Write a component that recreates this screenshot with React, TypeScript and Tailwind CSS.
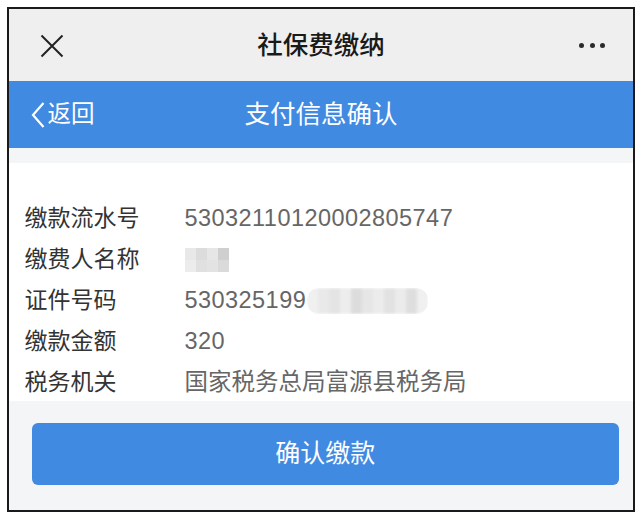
import React from "react";

const font = { fontFamily: "'Liberation Sans','Noto Sans CJK SC',sans-serif" };

function Blur({ cells, h }: { cells: string[]; h: number }) {
  return (
    <div className="flex blur-[1.5px]" style={{ height: h }}>
      {cells.map((c, i) => (
        <div key={i} className="w-[11px] h-full" style={{ background: c }} />
      ))}
    </div>
  );
}

export default function App() {
  const rows: [string, React.ReactNode][] = [
    ["缴款流水号", <span className="tracking-[0.45px]">53032110120002805747</span>],
    [
      "缴费人名称",
      <div className="flex flex-col blur-[0.6px]">
        <div className="flex h-[12px]">
          <div className="w-[11px] bg-[#e8e8e8]" />
          <div className="w-[11px] bg-[#dcdcdc]" />
          <div className="w-[11px] bg-[#e6e6e6]" />
          <div className="w-[11px] bg-[#cfcfcf]" />
        </div>
        <div className="flex h-[12px]">
          <div className="w-[11px] bg-[#ececec]" />
          <div className="w-[11px] bg-[#e0e0e0]" />
          <div className="w-[11px] bg-[#e3e3e3]" />
          <div className="w-[11px] bg-[#dadada]" />
        </div>
      </div>,
    ],
    [
      "证件号码",
      <div className="flex items-center">
        <span className="tracking-[0.45px]">530325199</span>
        <div className="ml-[1px] rounded-[12px] overflow-hidden">
          <Blur
            h={26}
            cells={["#f0f0f0", "#e9e9e9", "#e4e4e4", "#ededed", "#dcdcdc", "#e6e6e6", "#ececec", "#e2e2e2", "#ebebeb", "#dedede", "#f0f0f0"]}
          />
        </div>
      </div>,
    ],
    ["缴款金额", <span className="tracking-[0.45px]">320</span>],
    ["税务机关", "国家税务总局富源县税务局"],
  ];

  return (
    <div className="w-[643px] h-[519px] bg-white pt-[7px] pl-[7px]" style={font}>
      <div className="w-[628px] h-[505px] border-2 border-[#1a1a1a] flex flex-col overflow-hidden">
        {/* top nav */}
        <div className="h-[72px] shrink-0 bg-[#efefef] flex items-center justify-between pl-[30.5px] pr-[28px] relative">
          <svg width="24" height="24" viewBox="0 0 24 24" className="mt-[1px]">
            <path d="M1.5 1.5 L22.5 22.5 M22.5 1.5 L1.5 22.5" stroke="#222" strokeWidth="2" fill="none" />
          </svg>
          <div className="absolute left-0 right-0 text-center text-[25.5px] font-medium text-[#1a1a1a] pointer-events-none">
            社保费缴纳
          </div>
          <div className="flex gap-[5.5px] items-center mt-[1px]">
            <div className="w-[5px] h-[5px] rounded-full bg-[#2a2a2a]" />
            <div className="w-[5px] h-[5px] rounded-full bg-[#2a2a2a]" />
            <div className="w-[5px] h-[5px] rounded-full bg-[#2a2a2a]" />
          </div>
        </div>
        {/* blue bar */}
        <div className="h-[67px] shrink-0 bg-[#418ae2] flex items-center relative pl-[21.5px]">
          <div className="flex items-center text-white text-[23.5px]">
            <svg width="14" height="26" viewBox="0 0 14 26" className="mr-[3px]">
              <path d="M12.5 1 L2 13 L12.5 25" stroke="#fff" strokeWidth="2.2" fill="none" />
            </svg>
            <span>返回</span>
          </div>
          <div className="absolute left-0 right-0 text-center text-white text-[25.5px] pointer-events-none">
            支付信息确认
          </div>
        </div>
        <div className="h-[15px] shrink-0 bg-[#f4f5f7]" />
        {/* info */}
        <div className="bg-white pt-[33px] shrink-0">
          {rows.map(([k, v], i) => (
            <div key={i} className="h-[41px] flex items-center pl-[15.5px] pt-[4px]">
              <div className="w-[160px] text-[23px] text-[#333]">{k}</div>
              <div className="text-[23.5px] text-[#666]">{v}</div>
            </div>
          ))}
        </div>
        {/* footer */}
        <div className="flex-1 bg-[#f4f5f7] pt-[22px] pl-[23px] pr-[14.5px]">
          <div className="h-[62px] rounded-[6px] bg-[#418ae2] flex items-center justify-center text-white text-[25px]">
            确认缴款
          </div>
        </div>
      </div>
    </div>
  );
}
